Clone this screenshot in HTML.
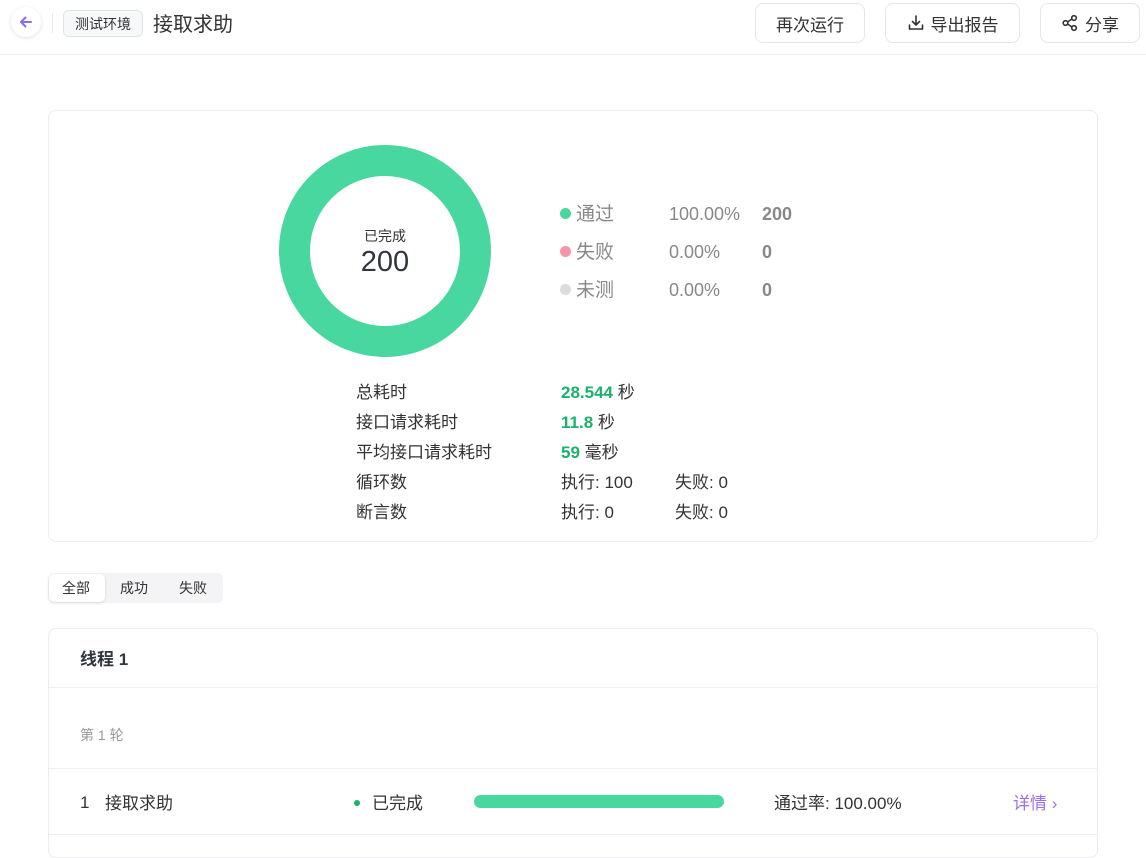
<!DOCTYPE html>
<html><head><meta charset="utf-8"><style>
*{box-sizing:border-box;margin:0;padding:0}
body{width:1146px;height:840px;overflow:hidden;background:#fff;font-family:"Liberation Sans","Noto Sans CJK SC",sans-serif;color:#303540;position:relative}
.abs{position:absolute}
.btn{position:absolute;top:3px;height:40px;border:1px solid #e4e6eb;border-radius:8px;display:flex;align-items:center;justify-content:center;font-size:17px;color:#333;gap:6px}
.t{position:absolute;white-space:nowrap}
</style></head><body>
<div class="abs" style="left:11px;top:7px;width:30px;height:30px;border-radius:50%;box-shadow:0 1px 4px rgba(0,0,0,.12);display:flex;align-items:center;justify-content:center">
<svg width="16" height="16" viewBox="0 0 16 16"><path d="M13 8H3M7.5 3.5L3 8l4.5 4.5" stroke="#8b6cf0" stroke-width="2" fill="none" stroke-linecap="round" stroke-linejoin="round"/></svg></div>
<div class="abs" style="left:52px;top:13px;width:1px;height:20px;background:#e8e8e8"></div>
<div class="abs" style="left:63px;top:10px;width:80px;height:27px;border:1px solid #e2e4e8;background:#f7f8fa;border-radius:6px;font-size:14px;display:flex;align-items:center;justify-content:center;color:#333">测试环境</div>
<div class="t" style="left:153px;top:8px;font-size:20px;color:#333">接取求助</div>
<div class="btn" style="left:755px;width:110px">再次运行</div>
<div class="btn" style="left:885px;width:135px"><svg width="18" height="18" viewBox="0 0 18 18" fill="none" stroke="#333" stroke-width="1.6" stroke-linecap="round"><path d="M9 2v9M5.5 7.5L9 11l3.5-3.5M2.5 11v4h13v-4"/></svg>导出报告</div>
<div class="btn" style="left:1040px;width:100px"><svg width="18" height="18" viewBox="0 0 18 18" fill="none" stroke="#333" stroke-width="1.6"><circle cx="13" cy="4" r="2.3"/><circle cx="4.5" cy="9" r="2.3"/><circle cx="13" cy="14" r="2.3"/><path d="M6.5 8L11 5M6.5 10L11 13"/></svg>分享</div>
<div class="abs" style="left:0;top:54px;width:1146px;height:1px;background:#efefef"></div>

<div class="abs" style="left:48px;top:110px;width:1050px;height:432px;border:1px solid #ececf0;border-radius:8px"></div>
<svg class="abs" style="left:279px;top:145px" width="212" height="212"><circle cx="106" cy="106" r="90.5" fill="none" stroke="#48d89f" stroke-width="31"/></svg>
<div class="t" style="left:385px;top:226px;transform:translateX(-50%);font-size:14px;color:#333">已完成</div>
<div class="t" style="left:385px;top:246px;transform:translateX(-50%);font-size:29px;color:#303540">200</div>

<div class="abs" style="left:560px;top:208px;width:11px;height:11px;border-radius:50%;background:#48d89f"></div>
<div class="abs" style="left:560px;top:246px;width:11px;height:11px;border-radius:50%;background:#f893a9"></div>
<div class="abs" style="left:560px;top:284px;width:11px;height:11px;border-radius:50%;background:#dcdcdc"></div>
<div class="t" style="left:576px;top:199px;font-size:19px;color:#888">通过</div>
<div class="t" style="left:576px;top:237px;font-size:19px;color:#888">失败</div>
<div class="t" style="left:576px;top:275px;font-size:19px;color:#888">未测</div>
<div class="t" style="left:669px;top:204px;font-size:18px;color:#888">100.00%</div>
<div class="t" style="left:669px;top:242px;font-size:18px;color:#888">0.00%</div>
<div class="t" style="left:669px;top:280px;font-size:18px;color:#888">0.00%</div>
<div class="t" style="left:762px;top:204px;font-size:18px;color:#888;font-weight:bold">200</div>
<div class="t" style="left:762px;top:242px;font-size:18px;color:#888;font-weight:bold">0</div>
<div class="t" style="left:762px;top:280px;font-size:18px;color:#888;font-weight:bold">0</div>

<div class="t" style="left:356px;top:378px;font-size:17px;line-height:30px;color:#333">总耗时<br>接口请求耗时<br>平均接口请求耗时<br>循环数<br>断言数</div>
<div class="t" style="left:561px;top:378px;font-size:17px;line-height:30px;color:#333"><b style="color:#19b36b">28.544</b> 秒<br><b style="color:#19b36b">11.8</b> 秒<br><b style="color:#19b36b">59</b> 毫秒<br>执行: 100<br>执行: 0</div>
<div class="t" style="left:675px;top:468px;font-size:17px;line-height:30px;color:#333">失败: 0<br>失败: 0</div>

<div class="abs" style="left:48px;top:573px;width:175px;height:30px;background:#f4f4f6;border-radius:6px"></div>
<div class="abs" style="left:49px;top:574px;width:56px;height:28px;background:#fff;border-radius:5px;box-shadow:0 1px 3px rgba(0,0,0,.12)"></div>
<div class="t" style="left:62px;top:578px;font-size:14px;color:#333">全部</div>
<div class="t" style="left:120px;top:578px;font-size:14px;color:#333">成功</div>
<div class="t" style="left:179px;top:578px;font-size:14px;color:#333">失败</div>

<div class="abs" style="left:48px;top:628px;width:1050px;height:230px;border:1px solid #ececf0;border-radius:8px"></div>
<div class="t" style="left:80px;top:645px;font-size:17px;font-weight:bold;color:#303540">线程 1</div>
<div class="abs" style="left:49px;top:687px;width:1048px;height:1px;background:#efefef"></div>
<div class="t" style="left:80px;top:725px;font-size:14px;color:#999">第 1 轮</div>
<div class="abs" style="left:49px;top:768px;width:1048px;height:1px;background:#efefef"></div>
<div class="t" style="left:80px;top:793px;font-size:17px;color:#333">1</div>
<div class="t" style="left:105px;top:789px;font-size:17px;color:#333">接取求助</div>
<div class="abs" style="left:354px;top:800px;width:6px;height:6px;border-radius:50%;background:#19b36b"></div>
<div class="t" style="left:372px;top:789px;font-size:17px;color:#333">已完成</div>
<div class="abs" style="left:474px;top:795px;width:250px;height:13px;border-radius:7px;background:#48d89f"></div>
<div class="t" style="left:774px;top:789px;font-size:17px;color:#333">通过率: 100.00%</div>
<div class="t" style="left:1013px;top:789px;font-size:17px;color:#9b6ff0">详情 ›</div>
<div class="abs" style="left:49px;top:834px;width:1048px;height:1px;background:#efefef"></div>
</body></html>
